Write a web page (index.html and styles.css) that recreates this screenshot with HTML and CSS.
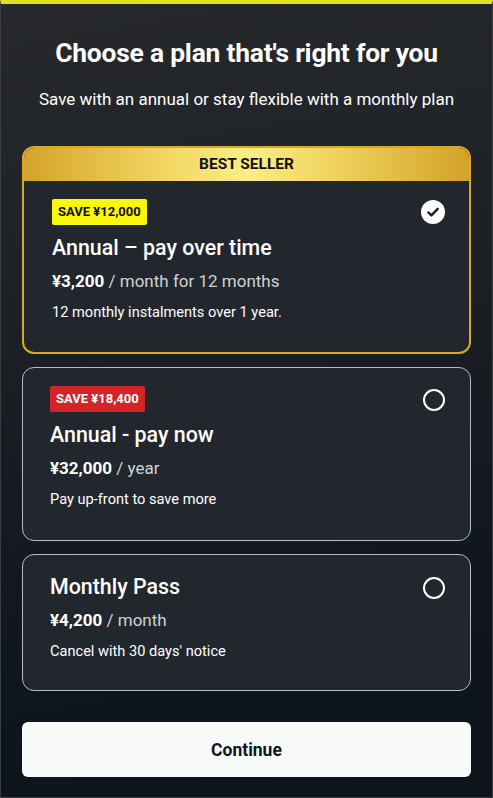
FILE: index.html
```html
<!DOCTYPE html>
<html lang="en">
<head>
<meta charset="utf-8">
<title>Choose a plan</title>
<link rel="stylesheet" href="styles.css">
</head>
<body>
<div class="frame">
  <header class="intro">
    <h1 class="title">Choose a plan that's right for you</h1>
    <p class="subtitle">Save with an annual or stay flexible with a monthly plan</p>
  </header>
  <div class="plans">
    <div class="card card--selected">
      <div class="ribbon">BEST SELLER</div>
      <div class="card-body">
        <div class="card-content">
          <span class="badge badge--yellow">SAVE ¥12,000</span>
          <h2 class="plan-name">Annual – pay over time</h2>
          <p class="price"><strong>¥3,200</strong> / month for 12 months</p>
          <p class="desc">12 monthly instalments over 1 year.</p>
        </div>
        <span class="radio radio--checked">
          <svg viewBox="0 0 24 24" width="24" height="24"><circle cx="12" cy="12" r="12" fill="#fff"/><path d="M7.3 12.4l3.1 3 6.3-6.6" fill="none" stroke="#1d2229" stroke-width="2.4" stroke-linecap="round" stroke-linejoin="round"/></svg>
        </span>
      </div>
    </div>
    <div class="card">
      <div class="card-body">
        <div class="card-content">
          <span class="badge badge--red">SAVE ¥18,400</span>
          <h2 class="plan-name">Annual - pay now</h2>
          <p class="price"><strong>¥32,000</strong> / year</p>
          <p class="desc">Pay up-front to save more</p>
        </div>
        <span class="radio"></span>
      </div>
    </div>
    <div class="card card--plain">
      <div class="card-body">
        <div class="card-content">
          <h2 class="plan-name">Monthly Pass</h2>
          <p class="price"><strong>¥4,200</strong> / month</p>
          <p class="desc">Cancel with 30 days' notice</p>
        </div>
        <span class="radio"></span>
      </div>
    </div>
  </div>
  <button class="continue" type="button">Continue</button>
</div>
</body>
</html>
```

FILE: styles.css
```css
* { box-sizing: border-box; }
html, body { margin: 0; padding: 0; }
body {
  width: 493px;
  height: 798px;
  font-family: Roboto, "Noto Sans", sans-serif;
  color: #fff;
  background: #0f151c;
}
.frame {
  width: 493px;
  height: 798px;
  border: 1px solid #3b3d40;
  border-top: 3px solid #e3e021;
  box-shadow: inset 0 1px 0 #e3e021;
  background: linear-gradient(170deg, #27292c 0%, #1d2126 35%, #10161d 75%, #0e141b 100%);
  padding: 0 21px 0 21px;
  display: flex;
  flex-direction: column;
}
.intro {
  text-align: center;
  padding-top: 33px;
}
.title {
  margin: 0;
  font-size: 26.4px;
  line-height: 34px;
  font-weight: 700;
  letter-spacing: -0.2px;
}
.subtitle {
  margin: 18px 0 0;
  font-size: 17px;
  line-height: 22px;
  font-weight: 400;
}
.plans {
  margin-top: 36px;
  display: flex;
  flex-direction: column;
  gap: 13px;
}
.card {
  background: #22272e;
  border: 1px solid #b9bcc0;
  border-radius: 12px;
  overflow: hidden;
}
.card--selected {
  border: 2px solid #d6a928;
}
.ribbon {
  height: 33px;
  line-height: 33px;
  text-align: center;
  font-size: 15.5px;
  font-weight: 700;
  color: #111;
  background: linear-gradient(90deg, #d4a32a 0%, #f1d35f 30%, #fbee86 50%, #efd25d 70%, #d3a229 100%);
}
.card-body {
  display: flex;
  justify-content: space-between;
  align-items: flex-start;
  padding: 18px 25px 31px 27px;
}
.card--selected .card-body {
  padding: 18px 25px 30px 28px;
}
.card--plain .card-body {
  padding-top: 18px;
  padding-bottom: 29px;
}
.card-content {
  display: flex;
  flex-direction: column;
  align-items: flex-start;
}
.badge {
  display: inline-block;
  height: 26px;
  line-height: 26px;
  padding: 0 6px;
  font-size: 13px;
  font-weight: 700;
  border-radius: 2px;
}
.badge--yellow {
  background: #f8f70d;
  color: #111;
}
.badge--red {
  background: #d32427;
  color: #fff;
}
.plan-name {
  margin: 9px 0 0;
  font-size: 21.4px;
  line-height: 28px;
  font-weight: 500;
}
.card--plain .plan-name { margin-top: 0; }
.price {
  margin: 7px 0 0;
  font-size: 17px;
  line-height: 24px;
  color: #cfd2d6;
}
.price strong {
  color: #fff;
  font-weight: 700;
}
.desc {
  margin: 9px 0 0;
  font-size: 14.6px;
  line-height: 20px;
}
.radio {
  flex: none;
  width: 22px;
  height: 22px;
  margin-top: 3px;
  border: 2px solid #fff;
  border-radius: 50%;
}
.radio--checked {
  width: 24px;
  height: 24px;
  margin-top: 1px;
  margin-right: -1px;
  border: 0;
  display: block;
}
.radio--checked svg { display: block; }
.card--plain .radio { margin-top: 4px; }
.continue {
  margin-top: 31px;
  height: 55px;
  width: 100%;
  border: 0;
  border-radius: 6px;
  background: #f8fafa;
  color: #0f151c;
  font-family: Roboto, "Noto Sans", sans-serif;
  font-size: 17.5px;
  font-weight: 700;
  cursor: pointer;
}
```
